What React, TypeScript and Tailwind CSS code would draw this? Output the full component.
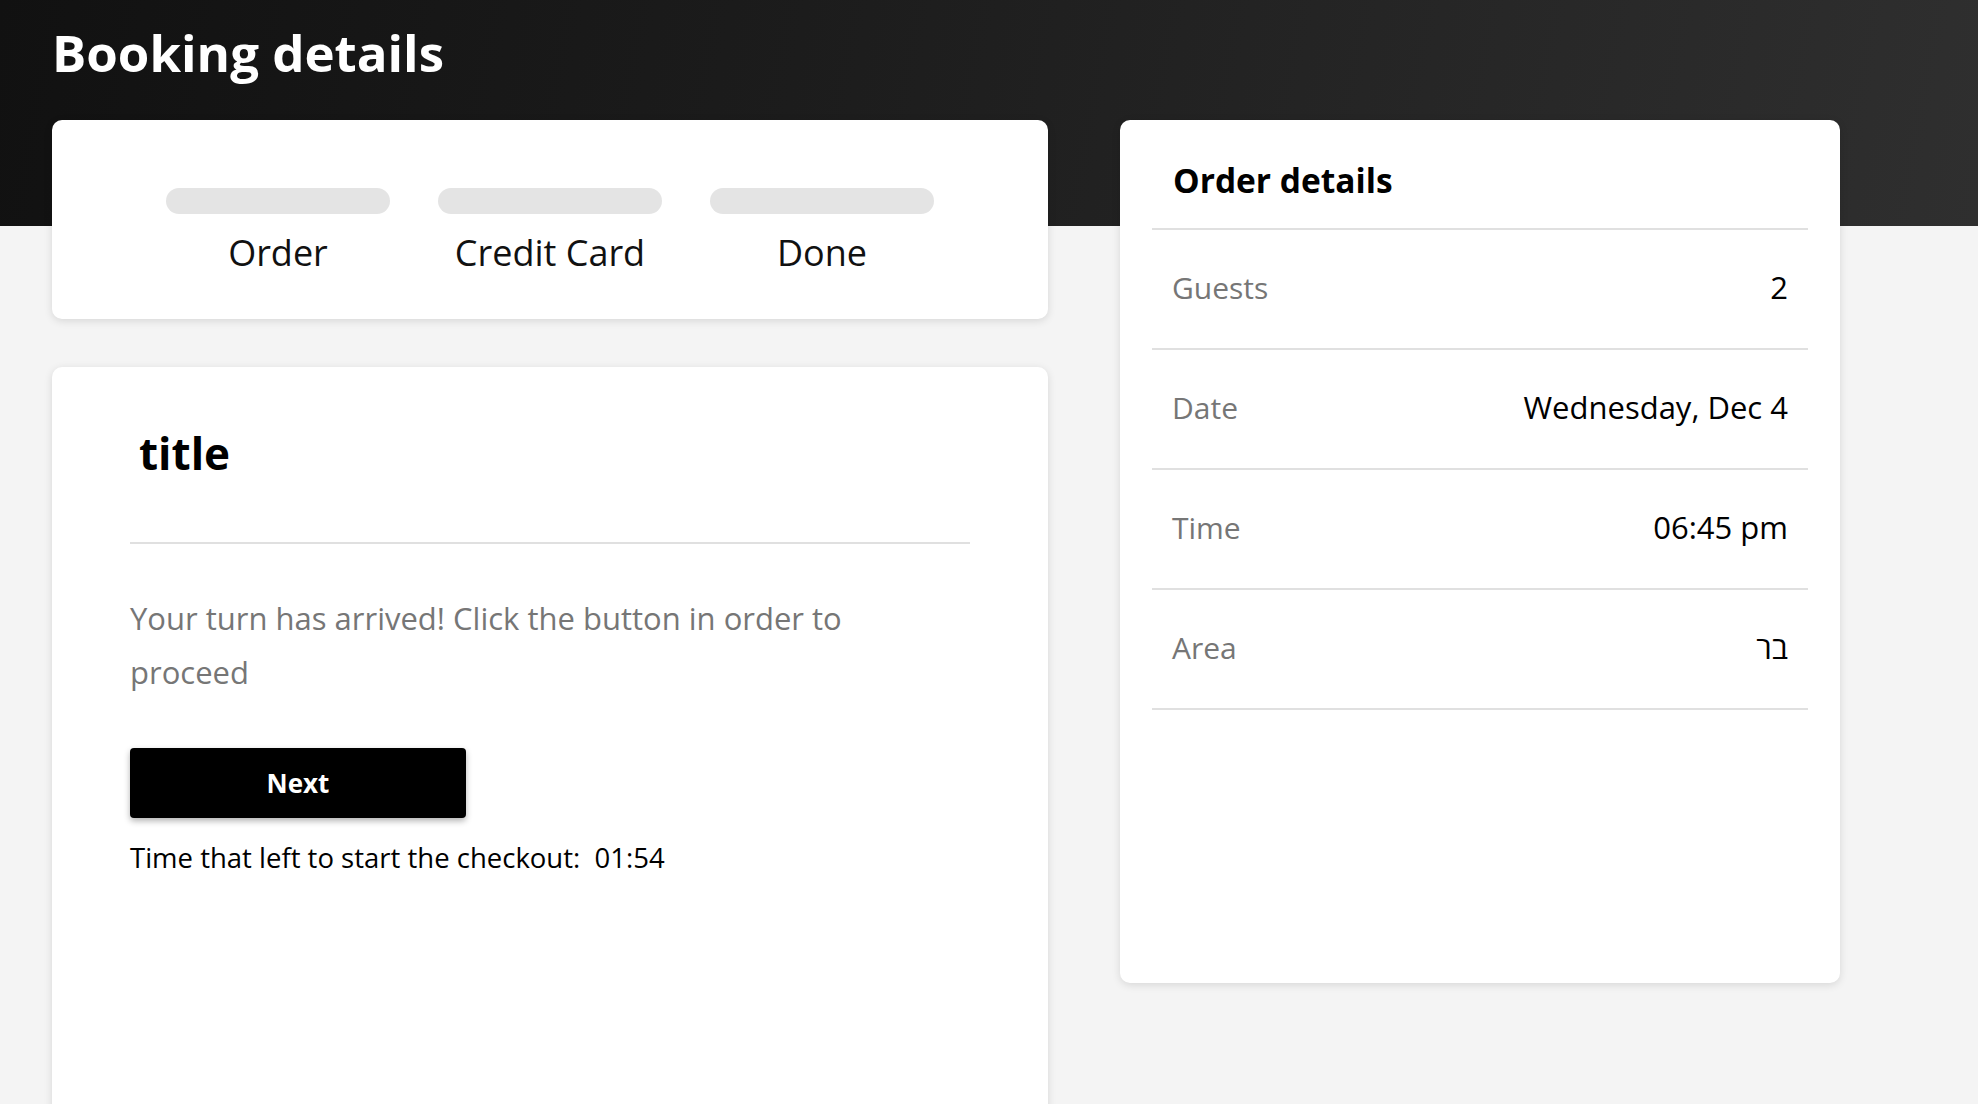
import React from "react";

const rows: [string, string][] = [
  ["Guests", "2"],
  ["Date", "Wednesday, Dec 4"],
  ["Time", "06:45 pm"],
  ["Area", "בר"],
];

export default function App() {
  return (
    <div
      className="min-h-[1104px] w-full bg-[#f4f4f4] bg-[linear-gradient(100deg,#111111_0%,#1c1c1c_40%,#2f2f2f_100%)] bg-no-repeat bg-[length:100%_226px] font-['Open_Sans','Noto_Sans_Hebrew','Noto_Sans',sans-serif] overflow-hidden h-[1104px]"
    >
      <div className="pl-[52px] pt-[26px]">
        <h1 className="text-[51px] leading-[52px] font-bold text-white">Booking details</h1>
        <div className="mt-[42px] flex gap-[72px] items-start">
          {/* Left column */}
          <div className="w-[996px] flex flex-col gap-[48px]">
            <div className="bg-white rounded-[10px] shadow-[0_2px_8px_rgba(0,0,0,0.12)] h-[199px] pt-[68px] flex justify-center gap-[48px]">
              {["Order", "Credit Card", "Done"].map((s) => (
                <div key={s} className="w-[224px] flex flex-col items-center">
                  <div className="w-[224px] h-[26px] rounded-full bg-[#e4e4e4]" />
                  <div className="mt-[12px] text-[36px] leading-[54px] text-[#111]">{s}</div>
                </div>
              ))}
            </div>
            <div className="bg-white rounded-[10px] shadow-[0_2px_8px_rgba(0,0,0,0.12)] h-[800px] px-[78px] pt-[56px]">
              <h2 className="pl-[9px] text-[44px] leading-[60px] font-bold text-black">title</h2>
              <div className="mt-[59px] h-[2px] bg-[#e0e0e0]" />
              <p className="mt-[47px] max-w-[740px] text-[31px] leading-[54px] text-[#767676]">
                Your turn has arrived! Click the button in order to proceed
              </p>
              <button className="mt-[49px] w-[336px] h-[70px] bg-black rounded-[4px] shadow-[0_3px_6px_rgba(0,0,0,0.3)] text-white text-[26px] font-bold flex items-center justify-center">
                Next
              </button>
              <div className="mt-[20px] text-[27.5px] leading-[40px] text-black whitespace-pre">
                {"Time that left to start the checkout:  01:54"}
              </div>
            </div>
          </div>
          {/* Right column */}
          <div className="w-[720px] h-[863px] bg-white rounded-[10px] shadow-[0_2px_8px_rgba(0,0,0,0.12)] px-[32px] pt-[40px]">
            <h3 className="pl-[21px] text-[33.5px] leading-[40px] font-bold text-black">Order details</h3>
            <div className="mt-[28px] border-t-2 border-[#e0e0e0]">
              {rows.map(([k, v]) => (
                <div key={k} className="h-[120px] border-b-2 border-[#e0e0e0] flex items-center justify-between px-[20px] pb-[4px]">
                  <span className="text-[30px] text-[#767676]">{k}</span>
                  <span className="text-[31px] text-black">{v}</span>
                </div>
              ))}
            </div>
          </div>
        </div>
      </div>
    </div>
  );
}
